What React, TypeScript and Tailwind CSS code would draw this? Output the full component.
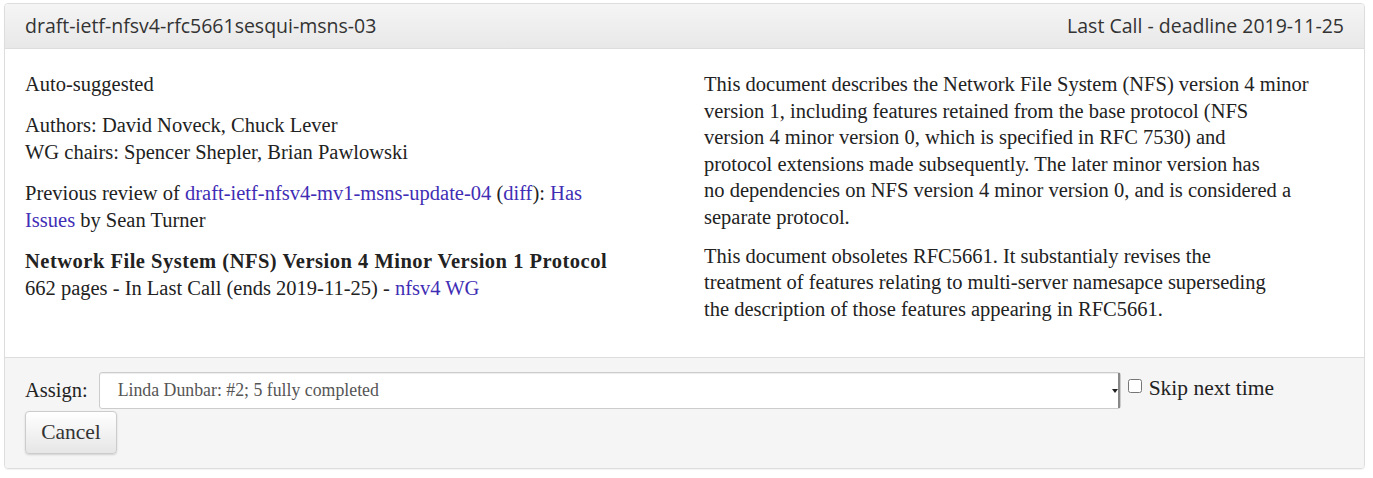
import { useState } from "react";

const serif = { fontFamily: '"Liberation Serif", "DejaVu Serif", serif' };

const App = () => {
  const [skip, setSkip] = useState(false);

  return (
    <div className="bg-white w-full h-[478px] pt-[3px] pl-[4px] pr-[8px]" style={serif}>
      <div className="border border-[#dddddd] rounded-[4px] shadow-[0_1px_1px_rgba(0,0,0,0.05)] overflow-hidden text-[#222222]">
        <div
          className="h-[45px] px-[20px] flex items-center justify-between border-b border-[#dddddd] bg-gradient-to-b from-[#f5f5f5] to-[#e8e8e8] text-[19.5px] text-[#333333]"
          style={{ fontFamily: '"Open Sans", "DejaVu Sans", sans-serif' }}
        >
          <span>draft-ietf-nfsv4-rfc5661sesqui-msns-03</span>
          <span>Last Call - deadline 2019-11-25</span>
        </div>

        <div className="flex pt-[22px] pb-[35px] px-[20px] text-[20.5px]">
          <div className="w-[679px] shrink-0 pr-[79px] leading-[27.5px] flex flex-col gap-[13px]">
            <p>Auto-suggested</p>
            <p>
              Authors: David Noveck, Chuck Lever
              <br />
              WG chairs: Spencer Shepler, Brian Pawlowski
            </p>
            <p>
              Previous review of{" "}
              <a className="text-[#3f2eb5]">draft-ietf-nfsv4-mv1-msns-update-04</a>{" "}
              (<a className="text-[#3f2eb5]">diff</a>):{" "}
              <a className="text-[#3f2eb5]">Has Issues</a> by Sean Turner
            </p>
            <p>
              <b className="tracking-[0.5px] whitespace-nowrap">
                Network File System (NFS) Version 4 Minor Version 1 Protocol
              </b>
              <br />
              662 pages - In Last Call (ends 2019-11-25) -{" "}
              <a className="text-[#3f2eb5]">nfsv4 WG</a>
            </p>
          </div>
          <div className="w-[620px] leading-[26.5px] flex flex-col gap-[12.5px] whitespace-nowrap">
            <p>
              This document describes the Network File System (NFS) version 4 minor
              <br />
              version 1, including features retained from the base protocol (NFS
              <br />
              version 4 minor version 0, which is specified in RFC 7530) and
              <br />
              protocol extensions made subsequently. The later minor version has
              <br />
              no dependencies on NFS version 4 minor version 0, and is considered a
              <br />
              separate protocol.
            </p>
            <p>
              This document obsoletes RFC5661. It substantialy revises the
              <br />
              treatment of features relating to multi-server namesapce superseding
              <br />
              the description of those features appearing in RFC5661.
            </p>
          </div>
        </div>

        <div className="bg-[#f5f5f5] border-t border-[#dddddd] h-[111px] pt-[14px] px-[20px]">
          <div className="flex items-start">
            <label className="text-[20.5px] leading-[37px] mr-[11px]">Assign:</label>
            <div className="relative w-[1022px] h-[37px] bg-white border border-[#cccccc] rounded-[3px] shadow-[inset_0_1px_1px_rgba(0,0,0,0.075)]">
              <span className="absolute left-[18px] top-0 leading-[35px] text-[17.8px] text-[#555555]">
                Linda Dunbar: #2; 5 fully completed
              </span>
              <span className="absolute right-0 top-0 h-[35px] w-[8px] border-r-2 border-[#888888] flex items-center justify-center">
                <span className="w-0 h-0 border-l-[3px] border-r-[3px] border-t-[4px] border-l-transparent border-r-transparent border-t-[#222222]" />
              </span>
            </div>
            <label className="flex items-center ml-[7px] mt-[3px] text-[21.5px] leading-[26px]">
              <input
                type="checkbox"
                checked={skip}
                onChange={() => setSkip(!skip)}
                className="w-[14px] h-[14px] mr-[7px] mt-[-4px]"
              />
              Skip next time
            </label>
          </div>
          <button className="mt-[2px] w-[92px] h-[43px] rounded-[4px] border border-[#cccccc] bg-gradient-to-b from-white to-[#e6e6e6] shadow-[0_1px_2px_rgba(0,0,0,0.15)] text-[21.5px] text-[#333333]">
            Cancel
          </button>
        </div>
      </div>
    </div>
  );
};

export default App;
